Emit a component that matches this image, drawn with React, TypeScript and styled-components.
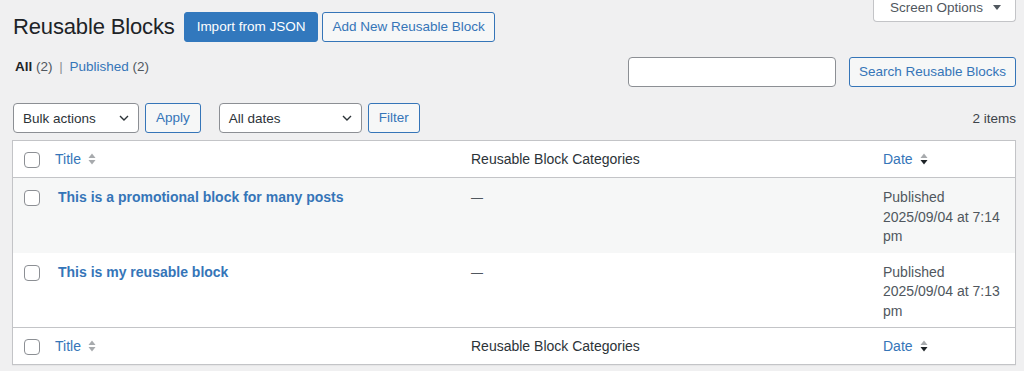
import React from "react";
import styled, { createGlobalStyle } from "styled-components";

const BLUE = "#3575b8";
const PRIMARY = "#3278bd";

const GlobalStyle = createGlobalStyle`
  html, body { margin: 0; padding: 0; background: #f0f0f1; }
  body {
    font-family: "Liberation Sans", Arial, sans-serif;
    color: #3c434a;
    font-size: 13.5px;
    -webkit-font-smoothing: antialiased;
  }
  * { box-sizing: border-box; }
`;

const Page = styled.div`
  padding: 0 8px 12px 12px;
`;

const TopBar = styled.div`
  display: flex;
  align-items: flex-start;
`;

const TitleRow = styled.div`
  flex: 1;
  display: flex;
  align-items: center;
  margin-top: 12px;
`;

const Heading = styled.h1`
  margin: 0 9px 0 1px;
  font-size: 22px;
  font-weight: 400;
  line-height: 30px;
  color: #1d2327;
  letter-spacing: -0.15px;
`;

const BaseButton = styled.button`
  height: 30px;
  display: inline-flex;
  align-items: center;
  border-radius: 3px;
  font-family: inherit;
  font-size: 13.5px;
  line-height: 1;
  white-space: nowrap;
  cursor: pointer;
`;

const PrimaryButton = styled(BaseButton)`
  background: ${PRIMARY};
  border: 1px solid ${PRIMARY};
  color: #fff;
  padding: 0 12px;
`;

const SecondaryButton = styled(BaseButton)<{ $gap?: number; $pad?: number }>`
  background: #f6f7f7;
  border: 1px solid ${BLUE};
  color: ${BLUE};
  padding: 0 ${(p) => p.$pad ?? 10}px;
  margin-left: ${(p) => p.$gap ?? 0}px;
`;

const ScreenOptionsTab = styled.button`
  display: flex;
  align-items: center;
  gap: 10px;
  height: 22px;
  padding: 0 14px 6px 16px;
  background: #fff;
  border: 1px solid #c3c4c7;
  border-top: none;
  border-radius: 0 0 4px 4px;
  font-family: inherit;
  font-size: 13.5px;
  line-height: 15px;
  color: #50575e;
`;

const FilterRow = styled.div`
  margin-top: 15px;
  display: flex;
  justify-content: space-between;
  align-items: flex-start;
`;

const ViewList = styled.ul`
  list-style: none;
  margin: 0;
  padding: 0 0 0 3px;
  display: flex;
  line-height: 20px;
  font-size: 13.5px;
`;

const ViewItem = styled.li``;

const ViewLink = styled.a<{ $current?: boolean }>`
  color: ${(p) => (p.$current ? "#1d2327" : BLUE)};
  font-weight: ${(p) => (p.$current ? 700 : 400)};
  text-decoration: none;
`;

const Count = styled.span`
  color: #50575e;
  font-weight: 400;
`;

const Sep = styled.span`
  display: inline-block;
  width: 17px;
  text-align: center;
  color: #8c8f94;
`;

const SearchBox = styled.div`
  display: flex;
  gap: 13px;
`;

const SearchInput = styled.input`
  width: 208px;
  height: 30px;
  border: 1px solid #8c8f94;
  border-radius: 4px;
  background: #fff;
  padding: 0 8px;
  font-family: inherit;
  font-size: 13.5px;
`;

const TableNav = styled.div`
  margin-top: 16px;
  height: 30px;
  display: flex;
  align-items: center;
`;

const ActionGroup = styled.div<{ $after?: number }>`
  display: flex;
  gap: 6px;
  margin-right: ${(p) => p.$after ?? 0}px;
`;

const SelectBox = styled.div<{ $w: number; $lead?: number }>`
  width: ${(p) => p.$w}px;
  margin-left: ${(p) => p.$lead ?? 0}px;
  height: 30px;
  border: 1px solid #8c8f94;
  border-radius: 4px;
  background: #fff;
  display: flex;
  align-items: center;
  justify-content: space-between;
  padding: 0 9px 0 9px;
  color: #2c3338;
  font-size: 13.5px;
`;

const ItemCount = styled.span`
  margin-left: auto;
  color: #3c434a;
  font-size: 13.5px;
`;

const Table = styled.table`
  margin-top: 7px;
  width: 100%;
  table-layout: fixed;
  border-spacing: 0;
  border: 1px solid #c3c4c7;
  background: #fff;
  box-shadow: 0 1px 1px rgba(0, 0, 0, 0.04);
`;

const Col = styled.col<{ $w: number }>`
  width: ${(p) => p.$w}px;
`;

const HeadCell = styled.th<{ $foot?: boolean }>`
  height: 37px;
  padding: 0 10px;
  text-align: left;
  font-weight: 400;
  font-size: 14px;
  line-height: 20px;
  color: #2c3338;
  vertical-align: middle;
  border-bottom: ${(p) => (p.$foot ? "none" : "1px solid #c3c4c7")};
  border-top: ${(p) => (p.$foot ? "1px solid #c3c4c7" : "none")};
`;

const CheckHeadCell = styled(HeadCell)`
  padding: 11px 0 0 11px;
  vertical-align: top;
`;

const SortLink = styled.a`
  display: inline-flex;
  align-items: center;
  color: ${BLUE};
  text-decoration: none;
`;

const SortSvg = styled.svg`
  margin-left: 7px;
  display: block;
`;

const Row = styled.tr<{ $alt?: boolean }>`
  background: ${(p) => (p.$alt ? "#f6f7f7" : "#fff")};
`;

const Cell = styled.td`
  padding: 10px 10px 6px;
  vertical-align: top;
  font-size: 14px;
  line-height: 19.5px;
  color: #50575e;
`;

const CheckCell = styled(Cell)`
  padding: 12px 0 0 11px;
`;

const TitleCell = styled(Cell)`
  padding-left: 13px;
`;

const RowTitle = styled.a`
  color: ${BLUE};
  font-weight: 700;
  text-decoration: none;
`;

const Dash = styled.span`
  font-size: 12px;
  color: #50575e;
`;

const Checkbox = styled.input.attrs({ type: "checkbox" })`
  appearance: none;
  -webkit-appearance: none;
  display: block;
  margin: 0;
  width: 16px;
  height: 16px;
  border: 1px solid #8c8f94;
  border-radius: 4px;
  background: #fff;
`;

const SortIcon = ({ down = "#a7aaad" }: { down?: string }) => (
  <SortSvg width="8" height="14" viewBox="0 0 8 14">
    <polygon points="0.5,6 4,1.5 7.5,6" fill="#a7aaad" />
    <polygon points="0.5,8 4,12.5 7.5,8" fill={down} />
  </SortSvg>
);

const Chevron = () => (
  <svg width="10" height="6" viewBox="0 0 10 6">
    <path d="M1 1 L5 5 L9 1" stroke="#2c3338" strokeWidth="1.4" fill="none" />
  </svg>
);

const Caret = () => (
  <svg width="8" height="5" viewBox="0 0 8 5">
    <polygon points="0,0 8,0 4,5" fill="#50575e" />
  </svg>
);

const HeaderRow = ({ foot }: { foot?: boolean }) => (
  <tr>
    <CheckHeadCell $foot={foot}>
      <Checkbox aria-label="Select all" />
    </CheckHeadCell>
    <HeadCell $foot={foot}>
      <SortLink href="#">
        Title
        <SortIcon />
      </SortLink>
    </HeadCell>
    <HeadCell $foot={foot}>Reusable Block Categories</HeadCell>
    <HeadCell $foot={foot}>
      <SortLink href="#">
        Date
        <SortIcon down="#1d2327" />
      </SortLink>
    </HeadCell>
  </tr>
);

const rows = [
  { title: "This is a promotional block for many posts", date: "2025/09/04 at 7:14 pm" },
  { title: "This is my reusable block", date: "2025/09/04 at 7:13 pm" },
];

export default function App() {
  return (
    <>
      <GlobalStyle />
      <Page>
        <TopBar>
          <TitleRow>
            <Heading>Reusable Blocks</Heading>
            <PrimaryButton>Import from JSON</PrimaryButton>
            <SecondaryButton $gap={4} $pad={9}>
              Add New Reusable Block
            </SecondaryButton>
          </TitleRow>
          <ScreenOptionsTab>
            Screen Options
            <Caret />
          </ScreenOptionsTab>
        </TopBar>

        <FilterRow>
          <ViewList>
            <ViewItem>
              <ViewLink $current>
                All <Count>(2)</Count>
              </ViewLink>
              <Sep>|</Sep>
            </ViewItem>
            <ViewItem>
              <ViewLink href="#">
                Published <Count>(2)</Count>
              </ViewLink>
            </ViewItem>
          </ViewList>
          <SearchBox>
            <SearchInput aria-label="Search" />
            <SecondaryButton $pad={9}>Search Reusable Blocks</SecondaryButton>
          </SearchBox>
        </FilterRow>

        <TableNav>
          <ActionGroup $after={18}>
            <SelectBox $w={126} $lead={1}>
              Bulk actions
              <Chevron />
            </SelectBox>
            <SecondaryButton>Apply</SecondaryButton>
          </ActionGroup>
          <ActionGroup>
            <SelectBox $w={143}>
              All dates
              <Chevron />
            </SelectBox>
            <SecondaryButton>Filter</SecondaryButton>
          </ActionGroup>
          <ItemCount>2 items</ItemCount>
        </TableNav>

        <Table>
          <colgroup>
            <Col $w={32} />
            <Col $w={416} />
            <Col $w={412} />
            <Col $w={142} />
          </colgroup>
          <thead>
            <HeaderRow />
          </thead>
          <tbody>
            {rows.map((r, i) => (
              <Row key={r.title} $alt={i % 2 === 0}>
                <CheckCell>
                  <Checkbox aria-label={`Select ${r.title}`} />
                </CheckCell>
                <TitleCell>
                  <RowTitle href="#">{r.title}</RowTitle>
                </TitleCell>
                <Cell>
                  <Dash>—</Dash>
                </Cell>
                <Cell>
                  Published
                  <br />
                  {r.date}
                </Cell>
              </Row>
            ))}
          </tbody>
          <tfoot>
            <HeaderRow foot />
          </tfoot>
        </Table>
      </Page>
    </>
  );
}
